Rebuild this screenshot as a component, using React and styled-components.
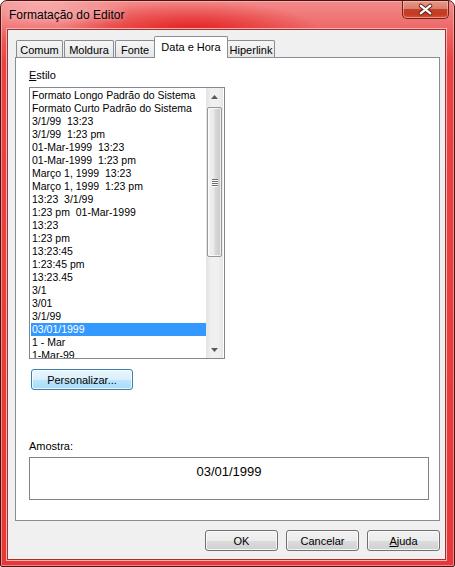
import * as React from "react";
import styled, { createGlobalStyle } from "styled-components";

const ITEMS = [
  "Formato Longo Padrão do Sistema",
  "Formato Curto Padrão do Sistema",
  "3/1/99  13:23",
  "3/1/99  1:23 pm",
  "01-Mar-1999  13:23",
  "01-Mar-1999  1:23 pm",
  "Março 1, 1999  13:23",
  "Março 1, 1999  1:23 pm",
  "13:23  3/1/99",
  "1:23 pm  01-Mar-1999",
  "13:23",
  "1:23 pm",
  "13:23:45",
  "1:23:45 pm",
  "13:23.45",
  "3/1",
  "3/01",
  "3/1/99",
  "03/01/1999",
  "1 - Mar",
  "1-Mar-99",
];

const TABS = [
  { label: "Comum", width: 47 },
  { label: "Moldura", width: 50 },
  { label: "Fonte", width: 40 },
  { label: "Data e Hora", width: 74, active: true },
  { label: "Hiperlink", width: 48 },
];

export default function App() {
  return (
    <>
      <GlobalStyle />
      <Window>
        <TitleBar>
          <Title>Formatação do Editor</Title>
          <CloseButton>
            <svg width="47" height="18" viewBox="0 0 47 18">
              <path d="M18.5 4.5 L28.5 12.5 M28.5 4.5 L18.5 12.5" stroke="#5b1d12" strokeWidth="4.2" strokeLinecap="round" />
              <path d="M18.5 4.5 L28.5 12.5 M28.5 4.5 L18.5 12.5" stroke="#ffffff" strokeWidth="2.4" strokeLinecap="round" />
            </svg>
          </CloseButton>
        </TitleBar>
        <Client>
          <TabRow>
            {TABS.map((t) => (
              <Tab key={t.label} $width={t.width} $active={t.active}>
                {t.label}
              </Tab>
            ))}
          </TabRow>
          <Panel>
            <Label>
              <u>E</u>stilo
            </Label>
            <ListBox>
              <Items>
                {ITEMS.map((it) => (
                  <Item key={it} $selected={it === "03/01/1999"}>
                    {it}
                  </Item>
                ))}
              </Items>
              <ScrollBar>
                <ArrowBox>
                  <svg width="7" height="4" viewBox="0 0 7 4">
                    <path d="M0 4 L3.5 0 L7 4 Z" fill="#5a5a5a" />
                  </svg>
                </ArrowBox>
                <Track>
                  <Thumb>
                    <Grip />
                    <Grip />
                    <Grip />
                    <Grip />
                  </Thumb>
                </Track>
                <ArrowBox>
                  <svg width="7" height="4" viewBox="0 0 7 4">
                    <path d="M0 0 L7 0 L3.5 4 Z" fill="#5a5a5a" />
                  </svg>
                </ArrowBox>
              </ScrollBar>
            </ListBox>
            <FocusButton>Personalizar...</FocusButton>
            <SampleLabel>Amostra:</SampleLabel>
            <SampleBox>03/01/1999</SampleBox>
          </Panel>
          <ButtonRow>
            <Button>OK</Button>
            <Button>Cancelar</Button>
            <Button>
              <u>A</u>juda
            </Button>
          </ButtonRow>
        </Client>
      </Window>
    </>
  );
}

const GlobalStyle = createGlobalStyle`
  html, body {
    margin: 0;
    padding: 0;
  }
  body {
    width: 455px;
    height: 567px;
    overflow: hidden;
    font-family: "Liberation Sans", Arial, sans-serif;
    font-size: 11px;
    color: #000;
  }
  * {
    box-sizing: border-box;
  }
`;

const Window = styled.div`
  width: 455px;
  height: 567px;
  display: flex;
  flex-direction: column;
  border: 1px solid #4a1510;
  border-radius: 7px 7px 2px 2px;
  background:
    radial-gradient(ellipse 130px 30px at 190px 30px, rgba(226, 18, 18, 0.85), rgba(226, 18, 18, 0)),
    radial-gradient(ellipse 90px 40px at 40px 0px, rgba(250, 190, 190, 0.7), rgba(250, 190, 190, 0)),
    linear-gradient(to bottom, #f28a8a 0px, #ee6767 28px, #e94343 60px, #e63838 100%);
  box-shadow: inset 0 0 0 1px rgba(255, 200, 200, 0.55);
`;

const TitleBar = styled.div`
  height: 29px;
  display: flex;
  justify-content: space-between;
  align-items: flex-start;
  padding-left: 8px;
`;

const Title = styled.div`
  font-size: 12px;
  line-height: 28px;
  color: #000;
  text-shadow: 0 0 6px rgba(255, 255, 255, 0.6);
`;

const CloseButton = styled.div`
  width: 47px;
  height: 18px;
  margin-right: 5px;
  border: 1px solid #6a2418;
  border-top: none;
  border-radius: 0 0 5px 5px;
  background: linear-gradient(
    to bottom,
    #e6998a 0%,
    #dc7d6b 45%,
    #c2412b 50%,
    #c83a22 80%,
    #e0563a 100%
  );
  box-shadow: inset 0 0 0 1px rgba(255, 210, 200, 0.5);
  display: flex;
`;

const Client = styled.div`
  flex: 1;
  margin: 0 9px 7px 7px;
  background: #f0f0f0;
  display: flex;
  flex-direction: column;
  padding: 6px 5px 8px 7px;
  box-shadow: 0 0 0 1px #a3302a, 0 0 0 2px #f6b3b3;
`;

const TabRow = styled.div`
  height: 21px;
  display: flex;
  align-items: flex-end;
  gap: 1px;
  padding-left: 1px;
  position: relative;
  z-index: 1;
`;

const Tab = styled.div`
  width: ${(p) => p.$width}px;
  height: ${(p) => (p.$active ? 22 : 17)}px;
  margin: ${(p) => (p.$active ? "0 -2px -1px -2px" : "0")};
  border: 1px solid #898c95;
  border-bottom: none;
  border-radius: 2px 2px 0 0;
  background: ${(p) =>
    p.$active ? "#ffffff" : "linear-gradient(to bottom, #f6f6f6, #e6e6e6)"};
  display: flex;
  align-items: center;
  justify-content: center;
  padding-bottom: ${(p) => (p.$active ? 2 : 0)}px;
  padding-top: ${(p) => (p.$active ? 0 : 1)}px;
  font-size: 11px;
  white-space: nowrap;
  position: relative;
  z-index: ${(p) => (p.$active ? 2 : 0)};
`;

const Panel = styled.div`
  flex: 1;
  border: 1px solid #898c95;
  background: #fff;
  display: flex;
  flex-direction: column;
  padding: 11px 0 0 13px;
`;

const Label = styled.div`
  line-height: 13px;
  height: 13px;
  margin-bottom: 5px;
`;

const ListBox = styled.div`
  width: 196px;
  height: 272px;
  border: 1px solid #828790;
  background: #fff;
  display: flex;
`;

const Items = styled.div`
  flex: 1;
  padding: 1px 0 0 1px;
  overflow: hidden;
  font-size: 10.5px;
`;

const Item = styled.div`
  height: 13px;
  line-height: 13px;
  padding-left: 1px;
  white-space: pre;
  background: ${(p) => (p.$selected ? "#3399ff" : "transparent")};
  color: ${(p) => (p.$selected ? "#fff" : "#000")};
`;

const ScrollBar = styled.div`
  width: 17px;
  margin-right: 1px;
  display: flex;
  flex-direction: column;
  background: linear-gradient(to right, #e3e3e3, #f0f0f0 30%, #f0f0f0 70%, #e6e6e6);
`;

const ArrowBox = styled.div`
  height: 17px;
  display: flex;
  align-items: center;
  justify-content: center;
`;

const Track = styled.div`
  flex: 1;
  padding: 2px 1px 0 1px;
`;

const Thumb = styled.div`
  height: 150px;
  border: 1px solid #979797;
  border-radius: 2px;
  background: linear-gradient(to right, #f4f4f4, #e9e9e9 45%, #d9d9d9 55%, #c8c8c8);
  box-shadow: inset 0 0 0 1px rgba(255, 255, 255, 0.7);
  display: flex;
  flex-direction: column;
  align-items: center;
  justify-content: center;
  gap: 1px;
`;

const Grip = styled.div`
  width: 6px;
  height: 1px;
  background: #6e6e6e;
  box-shadow: 0 1px 0 #fafafa;
`;

const FocusButton = styled.div`
  align-self: flex-start;
  margin: 10px 0 0 2px;
  width: 102px;
  height: 21px;
  border: 1px solid #3c7fb1;
  border-radius: 3px;
  background: linear-gradient(to bottom, #eaf6fd 0%, #d9f0fc 50%, #bee6fd 50%, #a9dbf6 100%);
  box-shadow: inset 0 0 0 1px rgba(255, 255, 255, 0.75);
  display: flex;
  align-items: center;
  justify-content: center;
`;

const SampleLabel = styled.div`
  margin-top: 50px;
  line-height: 13px;
  height: 13px;
`;

const SampleBox = styled.div`
  margin-top: 4px;
  width: 400px;
  height: 43px;
  border: 1px solid #828282;
  background: #fff;
  text-align: center;
  font-size: 13px;
  line-height: 15px;
  padding-top: 6px;
`;

const ButtonRow = styled.div`
  margin-top: 9px;
  display: flex;
  justify-content: flex-end;
  gap: 8px;
`;

const Button = styled.div`
  width: 73px;
  height: 21px;
  border: 1px solid #707070;
  border-radius: 3px;
  background: linear-gradient(to bottom, #f2f2f2 0%, #ebebeb 50%, #dddddd 50%, #cfcfcf 100%);
  box-shadow: inset 0 0 0 1px rgba(252, 252, 252, 0.8);
  display: flex;
  align-items: center;
  justify-content: center;
`;
